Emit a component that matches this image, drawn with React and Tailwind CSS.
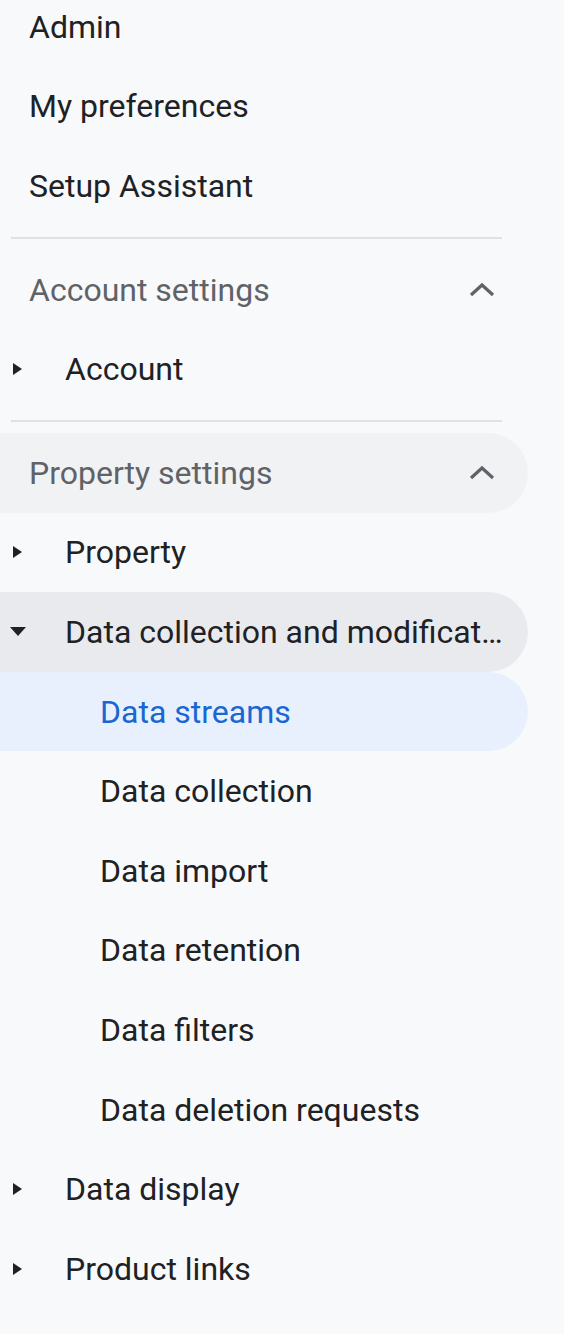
import React from "react";

const font = { fontFamily: "Roboto, 'Noto Sans', sans-serif" };

const RightArrow = () => (
  <svg className="w-[12px] h-[14px]" viewBox="0 0 12 14">
    <path d="M1 1 L10 7 L1 13 Z" fill="#202124" />
  </svg>
);

const DownArrow = () => (
  <svg className="w-[18px] h-[11px]" viewBox="0 0 18 11">
    <path d="M1 1 L17 1 L9 10 Z" fill="#202124" />
  </svg>
);

const ChevronUp = () => (
  <svg className="w-[28px] h-[16px]" viewBox="0 0 28 16">
    <path d="M3 13 L14 3 L25 13" fill="none" stroke="#5f6368" strokeWidth="3.2" />
  </svg>
);

const Divider = () => (
  <div className="h-[24px] flex items-center pl-[11px] pr-[62px]">
    <div className="h-[2px] w-full bg-[#dfe1e5]"></div>
  </div>
);

const TopItem = ({ label }) => (
  <div className="h-[79.6px] flex items-center pl-[29px] text-[32px] text-[#202124]">{label}</div>
);

const SectionHeader = ({ label, shaded }) => (
  <div
    className={`h-[79.6px] w-[528px] flex items-center justify-between pl-[29px] pr-[32px] rounded-r-full text-[32px] text-[#5f6368] ${
      shaded ? "bg-[#f1f2f4]" : ""
    }`}
  >
    <span>{label}</span>
    <ChevronUp />
  </div>
);

const Group = ({ label, open, active }) => (
  <div
    className={`h-[79.6px] w-[528px] flex items-center rounded-r-full text-[32px] text-[#202124] ${
      active ? "bg-[#e8eaed]" : ""
    }`}
  >
    <div className="w-[65px] shrink-0 flex items-center">
      {open ? (
        <span className="ml-[9px] flex"><DownArrow /></span>
      ) : (
        <span className="ml-[12px] flex"><RightArrow /></span>
      )}
    </div>
    <span className="truncate pr-[20px]">{label}</span>
  </div>
);

const SubItem = ({ label, selected }) => (
  <div
    className={`h-[79.6px] w-[528px] flex items-center pl-[100px] rounded-r-full text-[32px] ${
      selected ? "bg-[#e8f0fe] text-[#1967d2]" : "text-[#202124]"
    }`}
  >
    {label}
  </div>
);

export default function App() {
  const subItems = [
    "Data streams",
    "Data collection",
    "Data import",
    "Data retention",
    "Data filters",
    "Data deletion requests",
  ];

  return (
    <div className="w-[564px] h-[1334px] overflow-hidden bg-[#f8f9fa]" style={font}>
      <div className="-mt-[13px] flex flex-col">
        <TopItem label="Admin" />
        <TopItem label="My preferences" />
        <TopItem label="Setup Assistant" />
        <Divider />
        <SectionHeader label="Account settings" />
        <Group label="Account" />
        <Divider />
        <SectionHeader label="Property settings" shaded />
        <Group label="Property" />
        <Group label="Data collection and modification" open active />
        {subItems.map((s, i) => (
          <SubItem key={s} label={s} selected={i === 0} />
        ))}
        <Group label="Data display" />
        <Group label="Product links" />
      </div>
    </div>
  );
}
